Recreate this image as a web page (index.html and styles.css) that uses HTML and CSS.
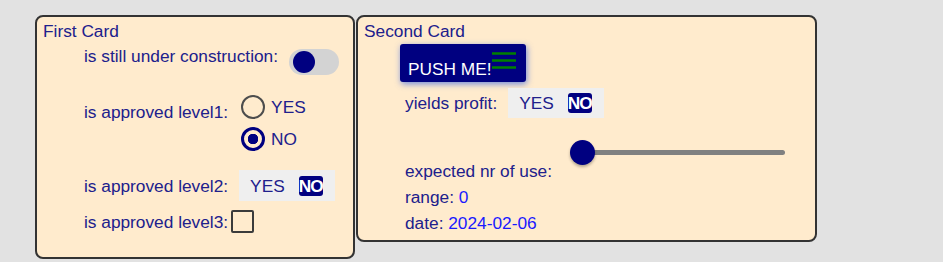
FILE: index.html
```html
<!DOCTYPE html>
<html>
<head>
    <title>Cards</title>
    <link rel="stylesheet" href="styles.css">
</head>
<body>
    <div class="page">
        <div class="card card-first">
            <div class="card-title">First Card</div>

            <div class="row row-top">
                <span class="label">is still under construction:</span>
                <span class="toggle"><span class="knob"></span></span>
            </div>

            <div class="row row-radio">
                <span class="label">is approved level1:</span>
                <div class="radio-group">
                    <label class="radio-option"><input type="radio" name="level1"> YES</label>
                    <label class="radio-option"><input type="radio" name="level1" checked> NO</label>
                </div>
            </div>

            <div class="row row-seg">
                <span class="label">is approved level2:</span>
                <div class="seg">
                    <span class="seg-item">YES</span>
                    <span class="seg-item active">NO</span>
                </div>
            </div>

            <div class="row row-check">
                <span class="label">is approved level3:</span>
                <input type="checkbox" class="check">
            </div>
        </div>

        <div class="card card-second">
            <div class="card-title">Second Card</div>

            <button class="push-btn">
                <span>PUSH ME!</span>
                <svg class="burger" width="24" height="17" viewBox="0 0 24 17">
                    <path d="M0 1.5H24M0 8.5H24M0 15.5H24" stroke="#008000" stroke-width="2.5"/>
                </svg>
            </button>

            <div class="row row-profit">
                <span class="label">yields profit:</span>
                <div class="seg">
                    <span class="seg-item">YES</span>
                    <span class="seg-item active">NO</span>
                </div>
            </div>

            <div class="row row-slider">
                <span class="label">expected nr of use:</span>
                <input type="range" class="slider" min="0" max="100" value="0">
            </div>

            <div class="line">range: <span class="value">0</span></div>
            <div class="line">date: <span class="value">2024-02-06</span></div>
        </div>
    </div>
</body>
</html>
```

FILE: styles.css
```css
body {
    margin: 0;
    background: #e2e2e2;
    font-family: 'Liberation Sans', Arial, sans-serif;
    font-size: 17.3px;
    line-height: 20px;
    color: #20208c;
}

.page {
    display: flex;
    align-items: flex-start;
    gap: 1px;
    padding: 15px 0 0 35px;
}

.card {
    box-sizing: border-box;
    background: #ffebcd;
    border: 2px solid #333;
    border-radius: 8px;
    padding: 5px 6px;
}

.card-first {
    width: 320px;
    padding-bottom: 24px;
}

.card-second {
    width: 461px;
    padding-bottom: 7px;
}

.card-title {
    line-height: 18px;
}

.row {
    display: flex;
    align-items: center;
    padding-left: 41px;
}

.row-top {
    align-items: flex-start;
    margin-top: 6px;
}

.toggle {
    box-sizing: border-box;
    width: 50px;
    height: 26px;
    margin: 3px 0 0 11px;
    padding: 2px 4px;
    background: #d3d3d3;
    border-radius: 13px;
}

.knob {
    display: block;
    width: 22px;
    height: 22px;
    border-radius: 50%;
    background: #000080;
}

.row-radio {
    align-items: flex-start;
    margin-top: 20px;
}

.row-radio .label {
    margin-top: 7px;
}

.radio-group {
    display: flex;
    flex-direction: column;
    gap: 8px;
    margin-left: 13px;
}

.radio-option {
    display: flex;
    align-items: center;
    gap: 6px;
}

.radio-option input {
    appearance: none;
    -webkit-appearance: none;
    box-sizing: border-box;
    width: 24px;
    height: 24px;
    margin: 0;
    border: 2.5px solid #4d4d4d;
    border-radius: 50%;
    background: transparent;
}

.radio-option input:checked {
    border: 3px solid #000080;
    background: radial-gradient(circle, #000080 0 5px, transparent 5.5px);
}

.row-seg {
    margin-top: 19px;
}

.seg {
    display: flex;
    align-items: center;
    gap: 14px;
    height: 31px;
    box-sizing: border-box;
    padding: 0 12px 0 11px;
    margin-left: 11px;
    background: #efefef;
}

.seg-item {
    line-height: 20px;
}

.seg-item.active {
    background: #000080;
    color: #fff;
    font-weight: bold;
    letter-spacing: -1px;
    border-radius: 3px;
}

.row-check {
    margin-top: 9px;
}

.check {
    appearance: none;
    -webkit-appearance: none;
    box-sizing: border-box;
    width: 23px;
    height: 23px;
    margin: 0 0 0 3px;
    border: 2px solid #3b3b3b;
    border-radius: 2px;
    background: transparent;
}

.push-btn {
    display: flex;
    align-items: flex-end;
    height: 38px;
    margin: 4px 0 0 36px;
    padding: 0 10px 3px 8px;
    border: none;
    border-radius: 3px;
    background: #000080;
    color: #fff;
    font-family: inherit;
    font-size: 17.3px;
    line-height: 20px;
    box-shadow: 1px 2px 6px rgba(65, 105, 225, 0.75);
}

.burger {
    align-self: flex-start;
    margin: 8px 0 0 0;
}

.row-profit {
    margin-top: 6px;
}

.row-profit .seg {
    height: 30px;
}

.row-slider {
    align-items: flex-end;
    margin-top: 22px;
}

.slider {
    -webkit-appearance: none;
    appearance: none;
    width: 215px;
    height: 25px;
    margin: 0 0 16px 18px;
    background: transparent;
}

.slider::-webkit-slider-runnable-track {
    height: 5px;
    background: #808080;
    border-radius: 3px;
}

.slider::-webkit-slider-thumb {
    -webkit-appearance: none;
    width: 25px;
    height: 25px;
    margin-top: -10px;
    border-radius: 50%;
    background: #000080;
    box-shadow: 0 2px 3px rgba(0, 0, 0, 0.3);
}

.line {
    margin-top: 6px;
    padding-left: 41px;
}

.value {
    color: #1a1aff;
}
```
